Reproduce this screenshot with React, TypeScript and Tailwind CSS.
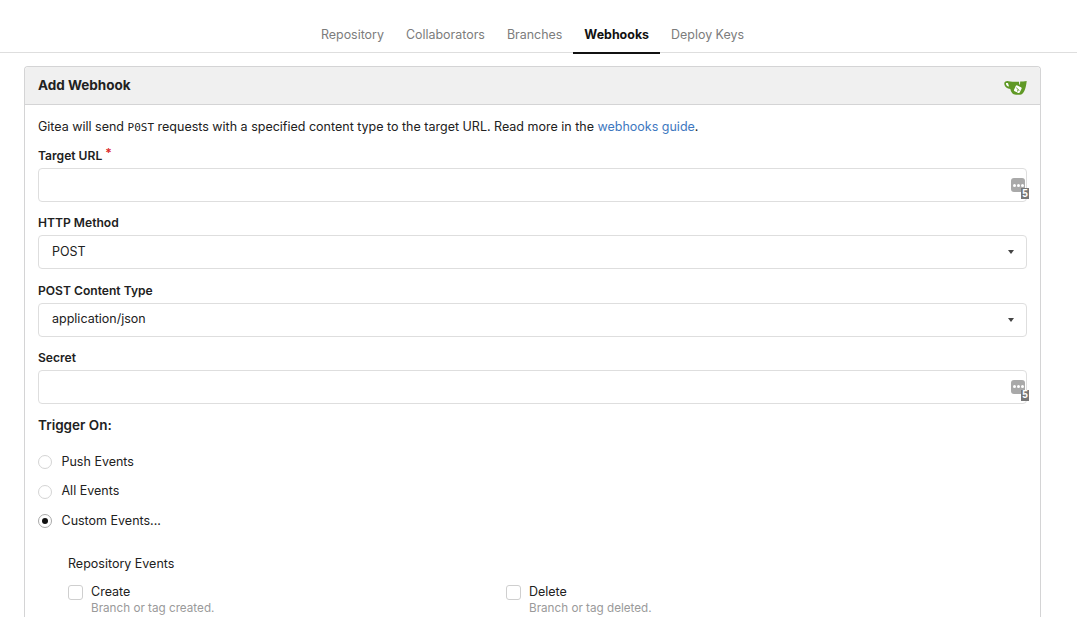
const PasswordBadge = () => (
  <span className="absolute right-[-3px] top-[9px] block h-[21px] w-[18px]" aria-hidden="true">
    <span className="absolute left-0 top-0 flex h-[14px] w-[14px] items-center justify-center gap-[1px] rounded-[3px] bg-[#a9a9a9]">
      <i className="block h-[3px] w-[3px] rounded-full bg-white" />
      <i className="block h-[3px] w-[3px] rounded-full bg-white" />
      <i className="block h-[3px] w-[3px] rounded-full bg-white" />
    </span>
    <span className="absolute bottom-0 right-0 flex h-[11px] w-[8px] items-center justify-center bg-[#777] font-['Liberation_Sans',sans-serif] text-[10px] font-bold leading-none text-white">5</span>
  </span>
);

const Field = ({ label, required, children }: { label: string; required?: boolean; children: React.ReactNode }) => (
  <div className="mb-[13.33px]">
    <label className="mb-[2px] block h-[18px] text-[12.1px] font-semibold leading-[16px] text-[#212121]">
      {label}
      {required && <span className="relative top-[-3px] ml-[3px] text-[#db2828]">*</span>}
    </label>
    {children}
  </div>
);

const Input = () => (
  <div className="relative h-[34px] rounded-[4px] border border-[#dedede] bg-white">
    <PasswordBadge />
  </div>
);

const Select = ({ value }: { value: string }) => (
  <div className="relative flex h-[34px] items-center rounded-[4px] border border-[#dedede] bg-white pl-[13px] text-[12.5px] text-[#212121]">
    {value}
    <span className="absolute right-[12px] top-[14px] h-0 w-0 border-x-[3.5px] border-t-[4px] border-x-transparent border-t-[#444]" />
  </div>
);

const Radio = ({ label, checked }: { label: string; checked?: boolean }) => (
  <div className="flex h-[18px] items-center gap-[9.5px] text-[12.5px] text-[#212121]">
    <span
      className={
        checked
          ? "flex h-[14px] w-[14px] items-center justify-center rounded-full border border-[#aaaaaa] bg-white"
          : "flex h-[14px] w-[14px] items-center justify-center rounded-full border border-[#d4d4d4] bg-white"
      }
    >
      {checked && <span className="block h-[6px] w-[6px] rounded-full bg-[#111]" />}
    </span>
    {label}
  </div>
);

const Check = ({ title, desc }: { title: string; desc: string }) => (
  <div className="flex gap-[8px]">
    <span className="mt-[1px] block h-[15px] w-[15px] rounded-[3px] border border-[#cfcfcf] bg-white" />
    <div>
      <div className="h-[17px] text-[12.5px] leading-[16px] text-[#212121]">{title}</div>
      <div className="text-[11.7px] leading-[15px] text-[#9a9a9a]">{desc}</div>
    </div>
  </div>
);

const Tab = ({ label, active }: { label: string; active?: boolean }) => (
  <div
    className={
      active
        ? "mb-[-2px] flex h-[38px] items-center border-b-2 border-[#111] px-[11px] pt-[3px] text-[12.45px] font-bold text-[#111]"
        : "flex h-[36px] items-center px-[11px] pt-[3px] text-[12.45px] text-[#7c7c7c]"
    }
  >
    {label}
  </div>
);

export default function App() {
  return (
    <div className="h-[617px] w-[1077px] overflow-hidden bg-white font-['Inter',sans-serif]">
      <div className="flex h-[53px] items-end justify-center border-b border-[#dedede] pr-[12px]">
        <Tab label="Repository" />
        <Tab label="Collaborators" />
        <Tab label="Branches" />
        <Tab label="Webhooks" active />
        <Tab label="Deploy Keys" />
      </div>
      <div className="mx-[24px] mt-[13px] h-[640px] w-[1017px] rounded-t-[4px] border border-b-0 border-[#d4d4d5]">
        <div className="flex h-[38px] items-center justify-between rounded-t-[4px] border-b border-[#d4d4d5] bg-[#f0f0f0] pb-[1px] pl-[13px] pr-[13px]">
          <h2 className="text-[13.5px] font-bold text-[#212121]">Add Webhook</h2>
          <svg width="23" height="15" viewBox="0 0 23 15" className="mt-[5px]" aria-label="Gitea logo">
            <path d="M4.5 1.2 C1.5 0.8 0 2 0.3 4.3 C0.7 7 3 8.6 6.3 9 C7 12 8.6 14.6 12 14.8 L16 14.8 C19.6 14.6 21.8 9.5 22.7 1 C20 1.4 18.5 1.5 16.2 1.6 L16 4.5 L15.2 4.5 L15 1.7 C11 1.8 7.5 1.6 4.5 1.2 Z" fill="#609926" />
            <path d="M2 3 C3 2.8 3.6 3 4 3.2 L5 6.6 C3.2 6.2 1.6 5 2 3 Z" fill="#fff" />
            <rect x="10.6" y="6" width="6.4" height="6.4" rx="1.2" transform="rotate(25 13.8 9.2)" fill="#fff" />
            <path d="M12.4 7.5 L13.9 9.5 L15.4 10.5 M13.9 9.5 L13.6 11.5" stroke="#609926" strokeWidth="0.9" fill="none" />
          </svg>
        </div>
        <div className="px-[13px] pt-[13px]">
          <p className="mb-[13px] h-[17px] text-[12.5px] leading-[17px] text-[#212121]">
            Gitea will send <code className="font-['DejaVu_Sans_Mono',monospace] text-[11px]">P0ST</code> requests with a specified content type to the target URL. Read more in the{" "}
            <span className="text-[#4078c0]">webhooks guide</span>.
          </p>
          <Field label="Target URL" required><Input /></Field>
          <Field label="HTTP Method"><Select value="POST" /></Field>
          <Field label="POST Content Type"><Select value="application/json" /></Field>
          <Field label="Secret"><Input /></Field>
          <h3 className="mt-[-2px] mb-[18px] text-[13.5px] font-semibold leading-[20px] text-[#212121]">Trigger On:</h3>
          <div className="flex flex-col gap-[11.5px]">
            <Radio label="Push Events" />
            <Radio label="All Events" />
            <Radio label="Custom Events..." checked />
          </div>
          <div className="pl-[30px] pt-[25px]">
            <div className="mb-[11px] h-[18px] text-[12.5px] leading-[18px] text-[#212121]">Repository Events</div>
            <div className="grid grid-cols-[438px_1fr]">
              <Check title="Create" desc="Branch or tag created." />
              <Check title="Delete" desc="Branch or tag deleted." />
            </div>
          </div>
        </div>
      </div>
    </div>
  );
}
